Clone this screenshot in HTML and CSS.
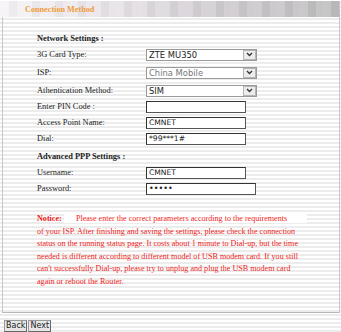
FILE: index.html
```html
<!DOCTYPE html>
<html lang="en">
<head>
  <meta charset="UTF-8" />
  <title>Connection Method</title>
  <link rel="stylesheet" href="styles.css">
</head>
<body>

<div class="header">
  <span class="title">Connection Method</span>
</div>

<div class="panel">
  <div class="row section"><b>Network Settings :</b></div>

  <div class="row">
    <label>3G Card Type:</label>
    <div class="select">
      <select><option>ZTE MU350</option></select>
      <span class="arrow"><svg width="7" height="5" viewBox="0 0 7 5"><path d="M1 1 L3.5 3.5 L6 1" fill="none" stroke="#333" stroke-width="1.3"/></svg></span>
    </div>
  </div>

  <div class="row sel">
    <label>ISP:</label>
    <div class="select muted">
      <select disabled><option>China Mobile</option></select>
      <span class="arrow"><svg width="7" height="5" viewBox="0 0 7 5"><path d="M1 1 L3.5 3.5 L6 1" fill="none" stroke="#333" stroke-width="1.3"/></svg></span>
    </div>
  </div>

  <div class="row sel">
    <label>Athentication Method:</label>
    <div class="select">
      <select><option>SIM</option></select>
      <span class="arrow"><svg width="7" height="5" viewBox="0 0 7 5"><path d="M1 1 L3.5 3.5 L6 1" fill="none" stroke="#333" stroke-width="1.3"/></svg></span>
    </div>
  </div>

  <div class="row">
    <label>Enter PIN Code :</label>
    <input type="text" value="">
  </div>

  <div class="row">
    <label>Access Point Name:</label>
    <input type="text" value="CMNET">
  </div>

  <div class="row">
    <label>Dial:</label>
    <input type="text" value="*99***1#">
  </div>

  <div class="row sel"><b>Advanced PPP Settings :</b></div>

  <div class="row">
    <label>Username:</label>
    <input type="text" value="CMNET">
  </div>

  <div class="row">
    <label>Password:</label>
    <input type="password" class="wide" value="12345">
  </div>

  <p class="notice">
    <b>Notice:</b> <span class="hl">&nbsp;&nbsp;&nbsp;&nbsp;&nbsp;&nbsp;Please enter the correct parameters according to the requirements&nbsp;&nbsp;&nbsp;&nbsp;&nbsp;&nbsp;&nbsp;&nbsp;&nbsp;&nbsp;</span><br>
    of your ISP. After finishing and saving the settings, please check the connection<br>
    status on the running status page. It costs about 1 minute to Dial-up, but the time<br>
    needed is different according to different model of USB modem card. If you still<br>
    can't successfully Dial-up, please try to unplug and plug the USB modem card<br>
    again or reboot the Router.
  </p>
</div>

<div class="footer">
  <button>Back</button><button>Next</button>
</div>

</body>
</html>
```

FILE: styles.css
```css
/* fondo rayado */
body {
  margin: 0;
  font-family: 'Liberation Serif', serif;
  font-size: 8.4px;
  color: #222;
  background: repeating-linear-gradient(#ffffff 0 2px, #ececec 2px 4px);
  width: 341px;
  height: 332px;
  overflow: hidden;
}

.header {
  margin-top: 1px;
  height: 16px;
  width: 340px;
  display: flex;
  align-items: center;
  padding-left: 25px;
  box-sizing: border-box;
  background:
    repeating-linear-gradient(90deg, rgba(255,255,255,0.12) 0 9px, rgba(0,0,0,0.03) 9px 17px, rgba(255,240,255,0.10) 17px 23px),
    linear-gradient(to right, #f6f4f6, #e6e2e6 35%, #cfcbd0 65%, #bdbdbd);
}

.title {
  color: #f39a3a;
  font-weight: bold;
  font-size: 8.2px;
}

.panel {
  margin-left: 2px;
  width: 338px;
  height: 296px;
  box-sizing: border-box;
  border-left: 1px solid #c8c8c8;
  border-right: 1px solid #c8c8c8;
  border-bottom: 1px solid #b8b8b8;
  padding: 14px 0 0 34px;
}

.row {
  height: 15px;
  margin-top: 1px;
  display: grid;
  grid-template-columns: 109px auto;
  align-items: center;
}

.row.section {
  margin-top: 0;
}

.row.sel {
  margin-top: 3px;
}

input {
  width: 100px;
  height: 12px;
  box-sizing: border-box;
  margin: 0;
  padding: 0 2px;
  border: 1px solid #333;
  border-right-color: #555;
  border-bottom-color: #555;
  background: #fff;
  font-family: 'DejaVu Sans', sans-serif;
  font-size: 7.6px;
  color: #222;
}

input.wide {
  width: 110px;
  font-size: 8px;
}

.select {
  position: relative;
  width: 111px;
  height: 12px;
}

select {
  appearance: none;
  width: 100%;
  height: 12px;
  box-sizing: border-box;
  margin: 0;
  padding: 0 0 0 2px;
  border: 1px solid #9a9a9a;
  border-radius: 0;
  background: #fff;
  font-family: 'DejaVu Sans', sans-serif;
  font-size: 8.4px;
  line-height: 10px;
  color: #222;
}

.muted select {
  color: #777;
  opacity: 1;
}

.arrow {
  position: absolute;
  right: 1px;
  top: 1px;
  width: 13px;
  height: 10px;
  box-sizing: border-box;
  border: 1px solid #b5b5b5;
  background: #ececec;
  display: flex;
  align-items: center;
  justify-content: center;
}

.notice {
  margin: 17px 0 0;
  color: #f01c20;
  font-size: 8.1px;
  line-height: 12.6px;
  white-space: nowrap;
}

.hl {
  background: #fff;
}

.footer {
  padding: 7px 0 0 4px;
  display: flex;
  gap: 1px;
}

button {
  height: 12px;
  margin: 0;
  padding: 0 1px;
  border: 1px solid #666;
  border-top-color: #999;
  border-left-color: #999;
  background: #e6e6e6;
  font-family: 'DejaVu Sans', sans-serif;
  font-size: 8px;
  line-height: 10px;
  color: #222;
}
```
